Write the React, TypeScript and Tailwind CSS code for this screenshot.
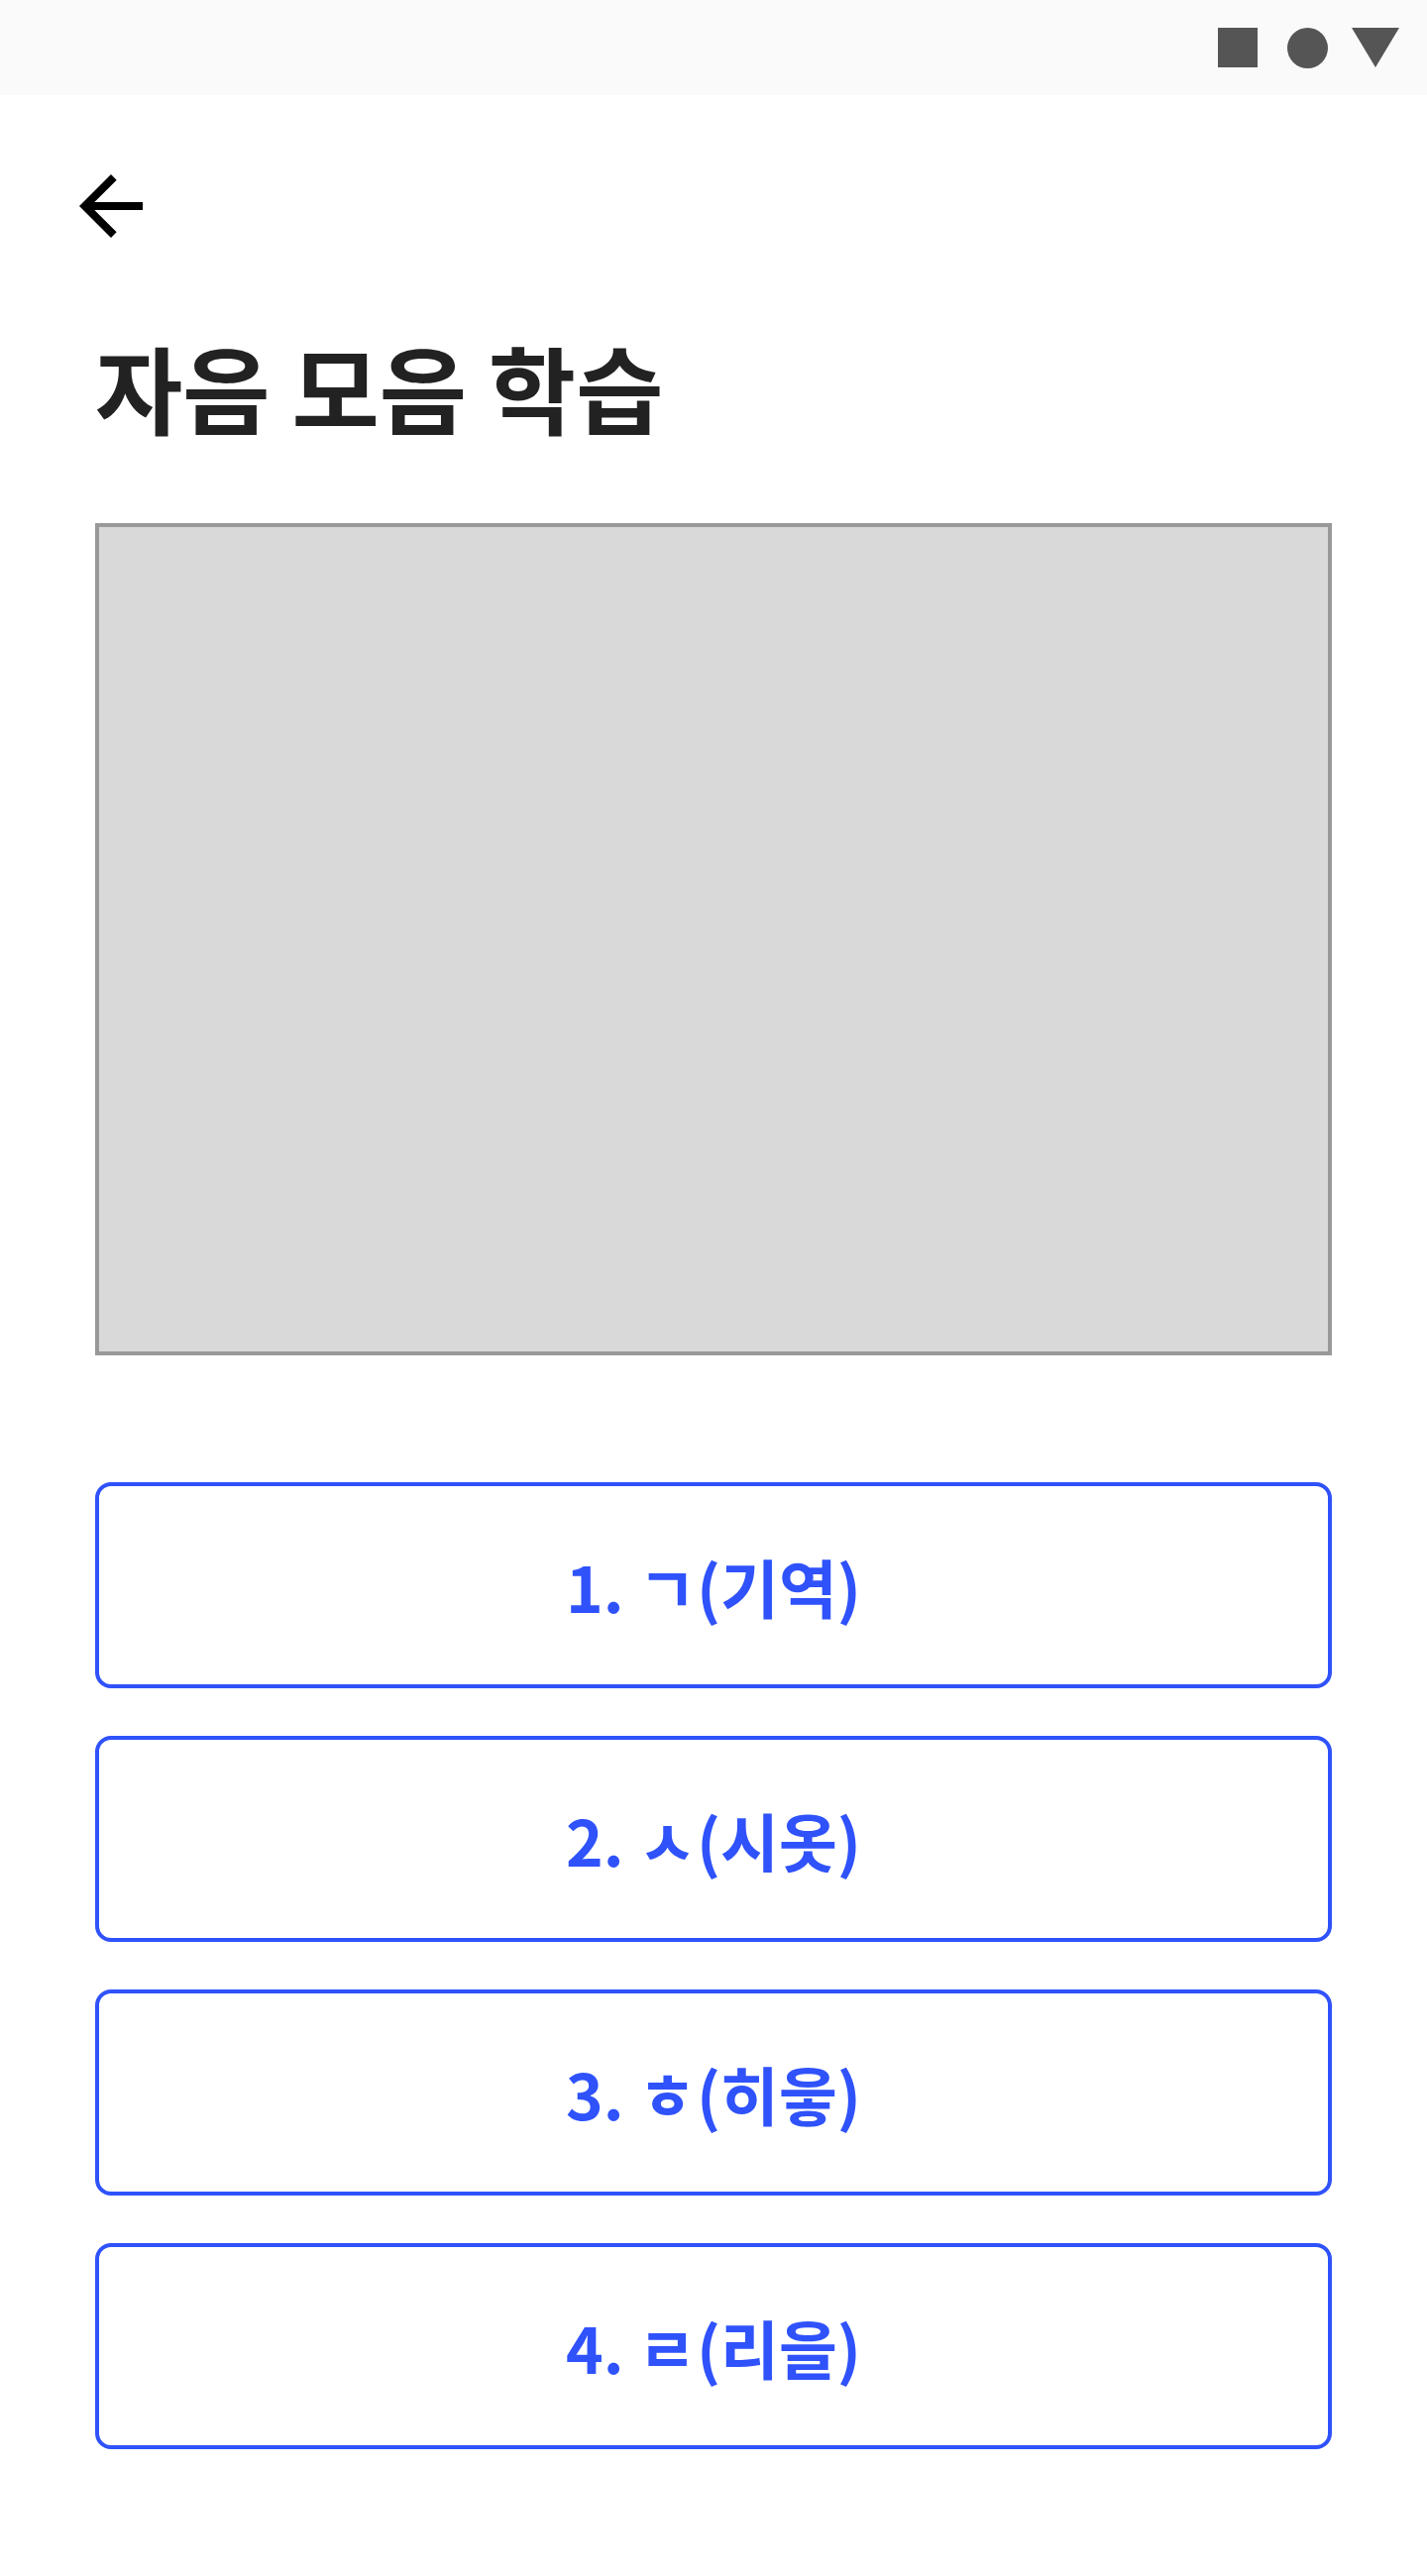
import React from 'react';

const items = ['1. ㄱ(기역)', '2. ㅅ(시옷)', '3. ㅎ(히읗)', '4. ㄹ(리을)'];

const App = () => {
  return (
    <div className="w-[1440px] min-h-[2600px] bg-white font-['Noto_Sans_CJK_KR',sans-serif]">
      {/* status bar */}
      <div className="h-[96px] bg-[#fafafa] flex items-center justify-end pr-[28px]">
        <div className="w-[40px] h-[40px] bg-[#555555]" />
        <div className="ml-[30px] w-[41px] h-[41px] rounded-full bg-[#555555]" />
        <svg className="ml-[24px]" width="48" height="40" viewBox="0 0 48 40">
          <polygon points="0,0 48,0 24,40" fill="#555555" />
        </svg>
      </div>

      {/* app bar */}
      <div className="h-[224px] px-[80px] pt-[80px]">
        <svg width="64" height="64" viewBox="4 4 16 16" fill="#000">
          <path d="M20 11H7.83l5.59-5.59L12 4l-8 8 8 8 1.41-1.41L7.83 13H20v-2z" />
        </svg>
      </div>

      <div className="px-[96px]">
        <h1 className="mt-[22px] text-[96px] leading-[96px] font-bold text-[#222222]">자음 모음 학습</h1>

        <div className="mt-[90px] h-[840px] border-4 border-[#999999] bg-[#d9d9d9]" />

        <div className="mt-[128px] flex flex-col gap-[48px]">
          {items.map((label) => (
            <button
              key={label}
              className="h-[208px] rounded-[16px] border-4 border-[#2f52fb] bg-white flex items-center justify-center text-[64px] font-bold text-[#2f52fb]"
            >
              {label}
            </button>
          ))}
        </div>
      </div>
    </div>
  );
};

export default App;
